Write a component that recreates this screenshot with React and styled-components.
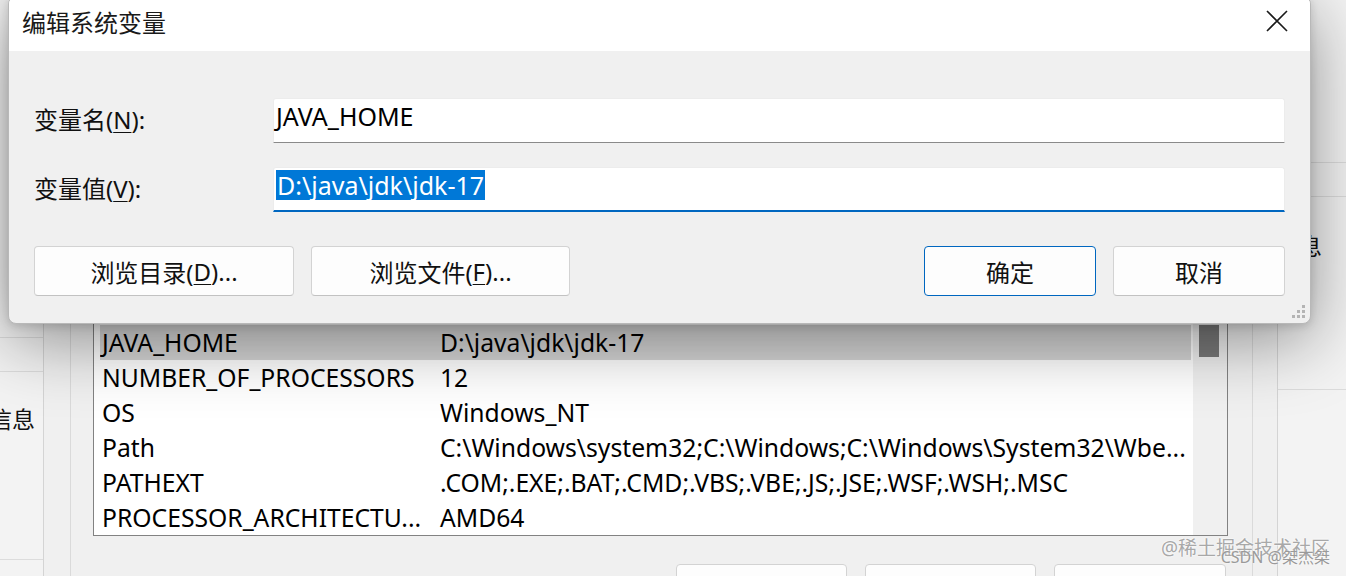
import React from "react";
import styled, { createGlobalStyle } from "styled-components";

const GlobalStyle = createGlobalStyle`
  html, body { margin: 0; padding: 0; }
  body { background: #f2f2f2; }
`;

const FONT = `"Noto Sans", "Noto Sans CJK SC", sans-serif`;

const Screen = styled.div`
  position: relative;
  width: 1346px;
  height: 576px;
  overflow: hidden;
  background: #f2f2f2;
  color: #000;
  font-family: ${FONT};
`;

/* ---------- windows behind the dialog ---------- */

const Backdrop = styled.div`
  display: flex;
  height: 100%;
`;

const SideWindow = styled.div`
  flex: none;
  width: ${(p) => p.$w}px;
  display: flex;
  flex-direction: column;
  background: #f3f3f3;
  overflow: hidden;
`;

const SideCell = styled.div`
  flex: none;
  height: ${(p) => p.$h}px;
  border-bottom: 1px solid #dcdcdc;
`;

const SideText = styled.div`
  margin-top: ${(p) => p.$top}px;
  margin-left: ${(p) => p.$left}px;
  font-size: 23px;
  line-height: 28px;
  white-space: nowrap;
  color: #111;
`;

const EnvWindow = styled.div`
  flex: 1;
  min-width: 0;
  display: flex;
  padding: 0 24px 0 26px;
  border-left: 1px solid #d4d4d4;
  border-right: 1px solid #d4d4d4;
  background: #f0f0f0;
`;

const GroupBox = styled.div`
  flex: 1;
  min-width: 0;
  display: flex;
  flex-direction: column;
  padding: 321px 24px 0 22px;
  border-left: 1px solid #dadada;
  border-right: 1px solid #dadada;
`;

const ListBox = styled.div`
  display: grid;
  grid-template-columns: minmax(0, 1fr) 34px;
  border: 1px solid #828282;
  background: #fff;
`;

const Rows = styled.div`
  min-width: 0;
  padding: 3px 2px 0 6px;
`;

const Row = styled.div`
  display: grid;
  grid-template-columns: 338px minmax(0, 1fr);
  height: 35px;
  align-items: center;
  padding-left: 2px;
  font-size: 24.7px;
  white-space: nowrap;
  overflow: hidden;
  background: ${(p) => (p.$selected ? "#d6d6d6" : "transparent")};
`;

const ScrollTrack = styled.div`
  background: #f0f0f0;
  padding: 3px 8px 0 6px;
`;

const ScrollThumb = styled.div`
  height: 32px;
  background: #7a7a7a;
`;

const BottomButtons = styled.div`
  display: flex;
  justify-content: flex-end;
  gap: 18px;
  margin-top: 28px;
  padding-right: 2px;
`;

const GhostButton = styled.div`
  box-sizing: border-box;
  width: ${(p) => p.$w}px;
  height: 50px;
  background: #fdfdfd;
  border: 1px solid #d3d3d3;
  border-radius: 4px;
`;

/* ---------- the dialog ---------- */

const Dialog = styled.div`
  position: absolute;
  left: 8px;
  top: -4px;
  width: 1303px;
  box-sizing: border-box;
  border: 1px solid #b8b8b8;
  border-radius: 8px;
  overflow: hidden;
  background: #f0f0f0;
  box-shadow: 0 16px 70px rgba(0, 0, 0, 0.42), 0 2px 10px rgba(0, 0, 0, 0.14);
`;

const TitleBar = styled.div`
  display: flex;
  align-items: flex-start;
  height: 54px;
  background: #fff;
`;

const Title = styled.div`
  flex: 1;
  padding: 10px 0 0 13px;
  font-size: 24px;
  line-height: 32px;
  color: #1a1a1a;
`;

const CloseButton = styled.div`
  width: 66px;
  height: 48px;
  display: flex;
  align-items: center;
  justify-content: center;
`;

const Body = styled.div`
  position: relative;
  display: flex;
  flex-direction: column;
  gap: 24px;
  padding: 47px 25px 27px 25px;
`;

const FieldRow = styled.div`
  display: grid;
  grid-template-columns: 239px 1fr;
  align-items: center;
`;

const Label = styled.div`
  font-size: 24px;
  line-height: 30px;
  margin-top: -2px;
  color: #111;
  u { text-decoration-thickness: 1px; text-underline-offset: 3px; }
`;

const TextBox = styled.div`
  height: 45px;
  box-sizing: border-box;
  display: flex;
  align-items: flex-start;
  padding: 2px 3px 0 2px;
  background: #fff;
  border: 1px solid #ececec;
  border-bottom: ${(p) => (p.$focused ? "2px solid #0067c0" : "1px solid #8a8a8a")};
  border-radius: 3px 3px 0 0;
  font-size: 25px;
  line-height: 30px;
  white-space: nowrap;
`;

const Selection = styled.span`
  background: #0078d7;
  color: #fff;
  line-height: 30px;
  padding: 0 1px;
`;

const ButtonRow = styled.div`
  display: flex;
  gap: 17px;
  margin-top: 10px;
`;

const Spacer = styled.div`
  flex: 1;
`;

const Button = styled.div`
  width: ${(p) => p.$w}px;
  height: 50px;
  box-sizing: border-box;
  display: flex;
  align-items: center;
  justify-content: center;
  background: #fdfdfd;
  border: 1px solid ${(p) => (p.$primary ? "#0067c0" : "#d3d3d3")};
  border-bottom-color: ${(p) => (p.$primary ? "#0067c0" : "#c2c2c2")};
  border-radius: 4px;
  font-size: 24px;
  color: #111;
  u { text-decoration-thickness: 1px; text-underline-offset: 3px; }
`;

const Grip = styled.svg`
  position: absolute;
  right: 4px;
  bottom: 4px;
`;

/* ---------- watermark ---------- */

const Watermark = styled.div`
  position: absolute;
  right: 16px;
  bottom: 15px;
  font-size: 19px;
  color: #a8a8a8;
  text-shadow: 0 0 2px #fff, 0 0 2px #fff;
  white-space: nowrap;
`;

const WatermarkSub = styled.div`
  position: absolute;
  right: 16px;
  bottom: 8px;
  font-size: 16px;
  color: #9a9a9a;
  text-shadow: 0 0 2px #fff;
  white-space: nowrap;
`;

const vars = [
  ["JAVA_HOME", "D:\\java\\jdk\\jdk-17", true],
  ["NUMBER_OF_PROCESSORS", "12"],
  ["OS", "Windows_NT"],
  ["Path", "C:\\Windows\\system32;C:\\Windows;C:\\Windows\\System32\\Wbe..."],
  ["PATHEXT", ".COM;.EXE;.BAT;.CMD;.VBS;.VBE;.JS;.JSE;.WSF;.WSH;.MSC"],
  ["PROCESSOR_ARCHITECTU...", "AMD64"],
];

export default function App() {
  return (
    <>
      <GlobalStyle />
      <Screen>
        <Backdrop>
          <SideWindow $w={43}>
            <SideCell $h={337} />
            <SideCell $h={33} />
            <SideCell $h={187}>
              <SideText $top={33} $left={-11}>信息</SideText>
            </SideCell>
          </SideWindow>

          <EnvWindow>
            <GroupBox>
              <ListBox>
                <Rows>
                  {vars.map(([name, value, sel]) => (
                    <Row key={name} $selected={sel}>
                      <span>{name}</span>
                      <span>{value}</span>
                    </Row>
                  ))}
                </Rows>
                <ScrollTrack>
                  <ScrollThumb />
                </ScrollTrack>
              </ListBox>
              <BottomButtons>
                <GhostButton $w={171} />
                <GhostButton $w={171} />
                <GhostButton $w={172} />
              </BottomButtons>
            </GroupBox>
          </EnvWindow>

          <SideWindow $w={68}>
            <SideCell $h={162} />
            <SideCell $h={33} />
            <SideCell $h={192}>
              <SideText $top={35} $left={21}>息</SideText>
            </SideCell>
          </SideWindow>
        </Backdrop>

        <Dialog>
          <TitleBar>
            <Title>编辑系统变量</Title>
            <CloseButton>
              <svg width="22" height="22" viewBox="0 0 22 22">
                <path d="M1 1 L21 21 M21 1 L1 21" stroke="#1a1a1a" strokeWidth="1.6" fill="none" />
              </svg>
            </CloseButton>
          </TitleBar>
          <Body>
            <FieldRow>
              <Label>变量名(<u>N</u>):</Label>
              <TextBox>JAVA_HOME</TextBox>
            </FieldRow>
            <FieldRow>
              <Label>变量值(<u>V</u>):</Label>
              <TextBox $focused>
                <Selection>D:\java\jdk\jdk-17</Selection>
              </TextBox>
            </FieldRow>
            <ButtonRow>
              <Button $w={260}>浏览目录(<u>D</u>)...</Button>
              <Button $w={259}>浏览文件(<u>F</u>)...</Button>
              <Spacer />
              <Button $w={172} $primary>确定</Button>
              <Button $w={172}>取消</Button>
            </ButtonRow>
            <Grip width="14" height="14" viewBox="0 0 14 14">
              <g fill="#b4b4b4">
                <rect x="10" y="0" width="3" height="3" />
                <rect x="5" y="5" width="3" height="3" />
                <rect x="10" y="5" width="3" height="3" />
                <rect x="0" y="10" width="3" height="3" />
                <rect x="5" y="10" width="3" height="3" />
                <rect x="10" y="10" width="3" height="3" />
              </g>
            </Grip>
          </Body>
        </Dialog>

        <Watermark>@稀土掘金技术社区</Watermark>
        <WatermarkSub>CSDN @桀杰桀</WatermarkSub>
      </Screen>
    </>
  );
}
